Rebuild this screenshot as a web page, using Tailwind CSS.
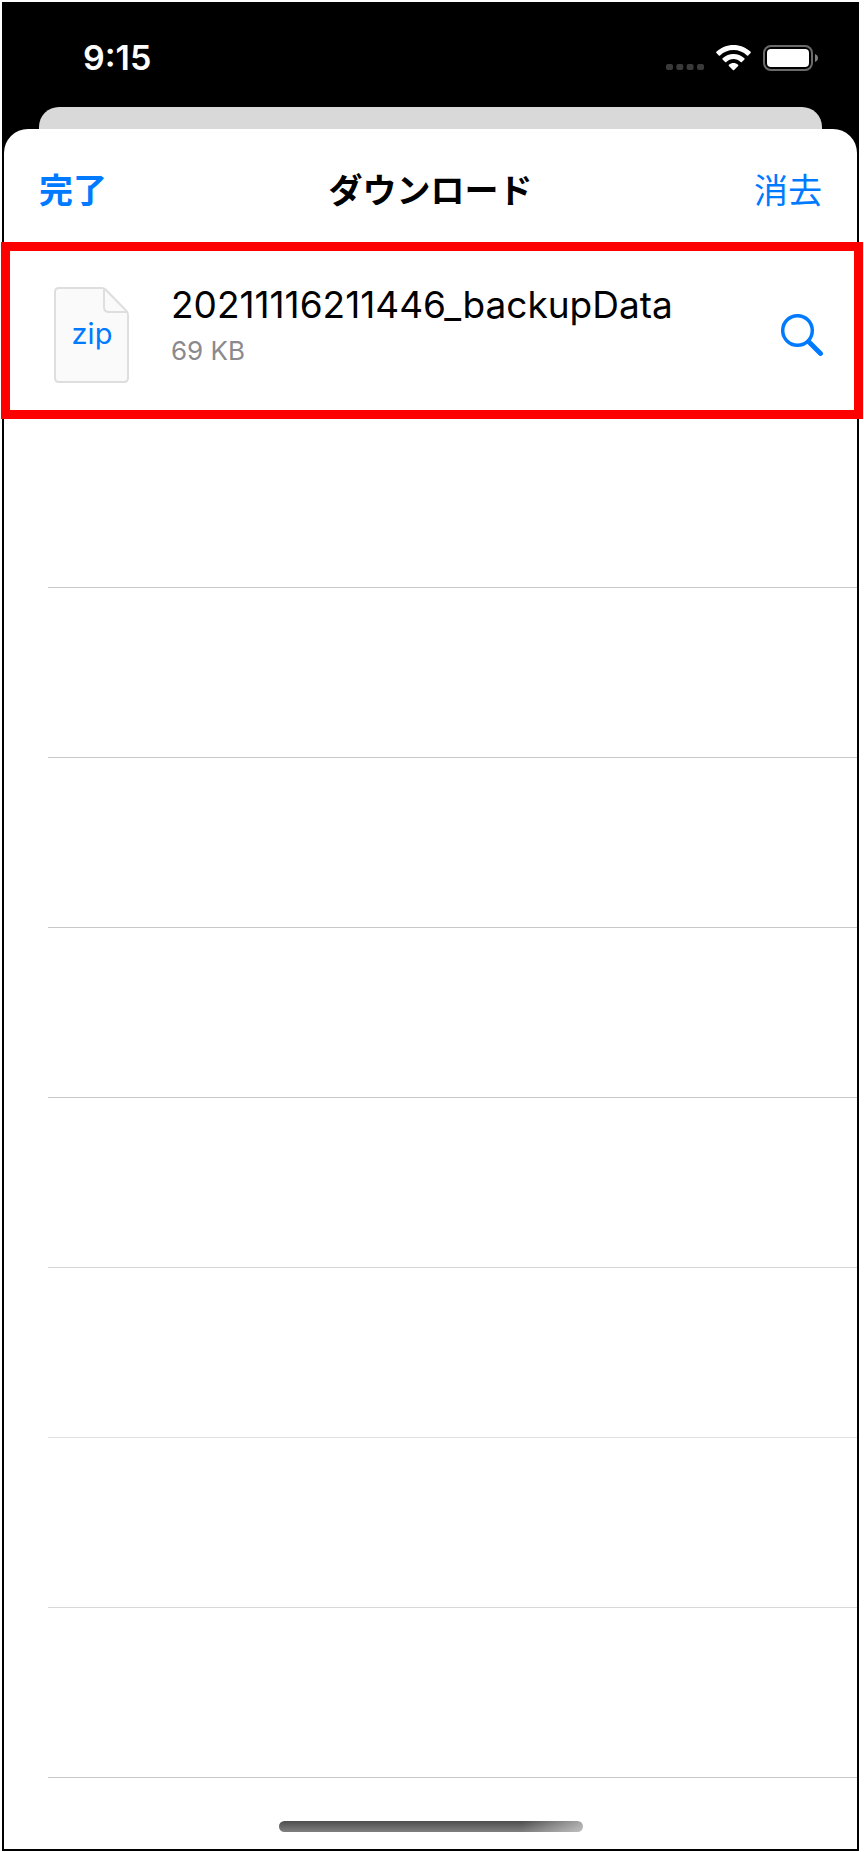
<!DOCTYPE html>
<html lang="ja">
  <head>
    <meta charset="UTF-8" />
    <meta name="viewport" content="width=device-width, initial-scale=1.0" />
    <title>ダウンロード</title>
    <script src="https://cdn.jsdelivr.net/npm/@tailwindcss/browser@4"></script>
  </head>
  <body class="bg-white font-['Inter','Noto_Sans_CJK_JP',sans-serif]">
    <div class="mt-[2px] mr-[5px] ml-[2px] border-2 border-black bg-black">
      <!-- Status bar -->
      <div class="flex h-[103px] items-center justify-between pt-1 pr-[38px] pl-[79px] text-white">
        <span class="text-[34px] leading-[40px] font-semibold">9:15</span>
        <div class="flex items-center">
          <svg class="mt-[18px] mr-[12px] h-[6px] w-[38px]" viewBox="0 0 38 6" fill="#3a3a3a">
            <rect x="0" width="7" height="6" rx="2" />
            <rect x="10.3" width="7" height="6" rx="2" />
            <rect x="20.6" width="7" height="6" rx="2" />
            <rect x="31" width="7" height="6" rx="2" />
          </svg>
          <svg class="mr-[12px] h-[26px] w-[35px]" viewBox="0 0 35 26" fill="currentColor">
            <path d="M17.5 0C24 0 30 2.4 34.6 6.8q.5.6 0 1.200L32.200 10.400q-.6.6-1.200 0C27.300 7 22.600 5 17.500 5S7.700 7 4 10.400q-.6.6-1.200 0L.4 8q-.5-.6 0-1.200C5 2.400 11 0 17.500 0z" />
            <path d="M17.500 9c4 0 7.800 1.500 10.900 4.200q.6.6 0 1.200l-2.500 2.500q-.6.5-1.200 0C22.700 15.100 20.200 14 17.500 14s-5.200 1.100-7.200 2.900q-.6.5-1.200 0l-2.500-2.500q-.6-.6 0-1.200C9.700 10.500 13.500 9 17.500 9z" />
            <path d="M17.500 18c1.700 0 3.300.6 4.600 1.700q.6.6 0 1.200l-4 4.100q-.6.6-1.200 0l-4-4.100q-.6-.6 0-1.200C14.200 18.600 15.800 18 17.500 18z" />
          </svg>
          <svg class="h-[26px] w-[56px]" viewBox="0 0 56 26">
            <rect x="1" y="1" width="48" height="24" rx="7" fill="none" stroke="#6b6b6b" stroke-width="2" />
            <rect x="4" y="4" width="42" height="18" rx="4" fill="#fff" />
            <path d="M52 9c1.800.7 3 2.200 3 4s-1.200 3.300-3 4z" fill="#808080" />
          </svg>
        </div>
      </div>

      <!-- Page behind the sheet -->
      <div class="mx-[35px] h-[22px] rounded-t-[20px] bg-[#d9d9d9]"></div>

      <!-- Downloads sheet -->
      <main class="rounded-t-[24px] bg-white">
        <header class="grid h-[119px] grid-cols-[1fr_auto_1fr] items-center px-[35px] pt-1 text-[34px] leading-[48px]">
          <button type="button" class="justify-self-start font-bold text-[#007aff]">完了</button>
          <h1 class="font-bold text-black">ダウンロード</h1>
          <button type="button" class="justify-self-end text-[#007aff]">消去</button>
        </header>

        <ul class="[&>li]:h-[170px]">
          <li class="relative flex items-center pt-1 pr-[34px] pl-[50px]">
            <svg class="mr-[42px] h-[96px] w-[75px] shrink-0" viewBox="0 0 75 96" fill="#fafafa" stroke="#dedede" stroke-width="2" stroke-linejoin="round">
              <path d="M5 1H48Q50 1 51.500 2.500L72.500 24Q74 25.500 74 28V91Q74 95 70 95H5Q1 95 1 91V5Q1 1 5 1Z" />
              <path d="M50 2V20Q50 25 55 25H73" fill="none" />
              <text x="38" y="57" text-anchor="middle" font-size="29" fill="#007aff" stroke="none">zip</text>
            </svg>
            <div class="mb-[16px] grow">
              <p class="text-[37px] leading-[48px] text-black">20211116211446_backupData</p>
              <p class="text-[26px] leading-[44px] text-[#8a8a8e]">69 KB</p>
            </div>
            <button type="button" aria-label="ファイルを表示">
              <svg class="h-[42px] w-[42px]" viewBox="0 0 42 42" fill="none" stroke="#007aff" stroke-linecap="round">
                <circle cx="16.500" cy="16.500" r="14.800" stroke-width="3.500" />
                <path d="M28 28L39.500 39.500" stroke-width="4.800" />
              </svg>
            </button>
            <!-- Highlight frame -->
            <div class="pointer-events-none absolute -top-[6px] -right-[6px] -bottom-[1px] -left-[3px] border-[9px] border-[#ff0000]"></div>
          </li>
          <li class="ml-[44px] border-b border-[#c8c8c8]"></li>
          <li class="ml-[44px] border-b border-[#c8c8c8]"></li>
          <li class="ml-[44px] border-b border-[#c8c8c8]"></li>
          <li class="ml-[44px] border-b border-[#c8c8c8]"></li>
          <li class="ml-[44px] border-b border-[#d8d8d8]"></li>
          <li class="ml-[44px] border-b border-[#e2e2e2]"></li>
          <li class="ml-[44px] border-b border-[#d8d8d8]"></li>
          <li class="ml-[44px] border-b border-[#c8c8c8]"></li>
        </ul>

        <!-- Home indicator -->
        <div class="flex h-[71px] items-end justify-center pb-[17px]">
          <div class="h-[11px] w-[304px] rounded-full bg-[linear-gradient(to_right,transparent_80%,#ffffff80),linear-gradient(#4d4d4d,#808080)]"></div>
        </div>
      </main>
    </div>
  </body>
</html>
